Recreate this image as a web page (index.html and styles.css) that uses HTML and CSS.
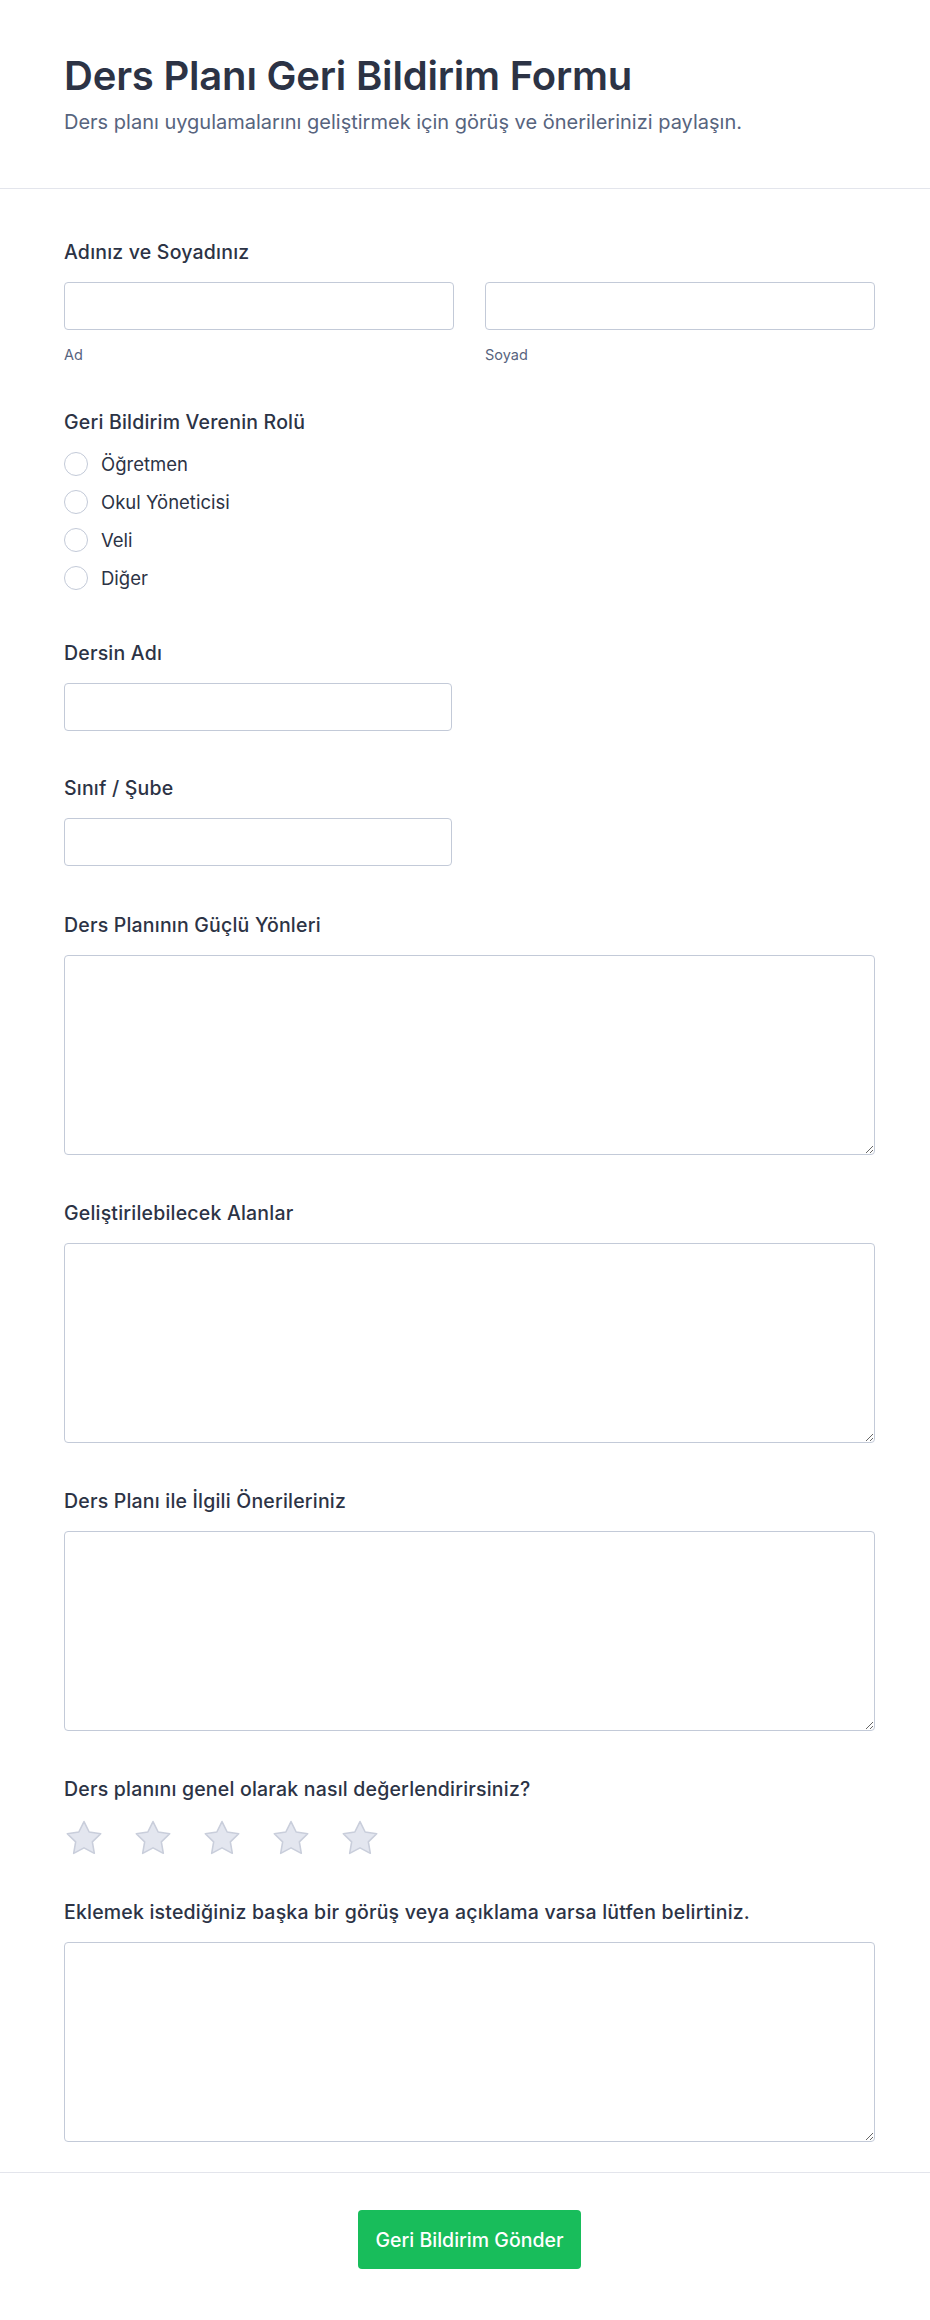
FILE: index.html
```html
<!DOCTYPE html>
<html lang="tr">
<head>
<meta charset="utf-8">
<title>Ders Planı Geri Bildirim Formu</title>
<link rel="stylesheet" href="styles.css">
</head>
<body>
<header class="page-header">
  <h1 class="title">Ders Planı Geri Bildirim Formu</h1>
  <p class="subtitle">Ders planı uygulamalarını geliştirmek için görüş ve önerilerinizi paylaşın.</p>
</header>

<form class="form">
  <div class="field">
    <label class="label">Adınız ve Soyadınız</label>
    <div class="name-grid">
      <div class="name-col">
        <input class="input" type="text">
        <span class="sublabel">Ad</span>
      </div>
      <div class="name-col">
        <input class="input" type="text">
        <span class="sublabel">Soyad</span>
      </div>
    </div>
  </div>

  <div class="field field-radio">
    <label class="label">Geri Bildirim Verenin Rolü</label>
    <div class="radio-list">
      <label class="radio"><span class="radio-circle"></span><span>Öğretmen</span></label>
      <label class="radio"><span class="radio-circle"></span><span>Okul Yöneticisi</span></label>
      <label class="radio"><span class="radio-circle"></span><span>Veli</span></label>
      <label class="radio"><span class="radio-circle"></span><span>Diğer</span></label>
    </div>
  </div>

  <div class="field">
    <label class="label">Dersin Adı</label>
    <input class="input input-half" type="text">
  </div>

  <div class="field field-before-area">
    <label class="label">Sınıf / Şube</label>
    <input class="input input-half" type="text">
  </div>

  <div class="field field-area">
    <label class="label">Ders Planının Güçlü Yönleri</label>
    <textarea class="textarea"></textarea>
  </div>

  <div class="field field-area">
    <label class="label">Geliştirilebilecek Alanlar</label>
    <textarea class="textarea"></textarea>
  </div>

  <div class="field field-area">
    <label class="label">Ders Planı ile İlgili Önerileriniz</label>
    <textarea class="textarea"></textarea>
  </div>

  <div class="field field-rating">
    <label class="label label-rating">Ders planını genel olarak nasıl değerlendirirsiniz?</label>
    <div class="stars">
      <svg class="star" viewBox="0 0 24 24"><path d="M12 2.6l2.95 5.98 6.6.96-4.78 4.65 1.13 6.57L12 17.66l-5.9 3.1 1.130-6.57-4.78-4.65 6.6-.96z"/></svg>
      <svg class="star" viewBox="0 0 24 24"><path d="M12 2.6l2.95 5.98 6.6.96-4.78 4.65 1.13 6.57L12 17.66l-5.9 3.1 1.13-6.57-4.78-4.65 6.6-.96z"/></svg>
      <svg class="star" viewBox="0 0 24 24"><path d="M12 2.6l2.95 5.98 6.6.96-4.78 4.65 1.13 6.57L12 17.66l-5.9 3.1 1.13-6.57-4.78-4.65 6.6-.96z"/></svg>
      <svg class="star" viewBox="0 0 24 24"><path d="M12 2.6l2.95 5.98 6.6.96-4.78 4.65 1.13 6.57L12 17.66l-5.9 3.1 1.13-6.57-4.78-4.65 6.6-.96z"/></svg>
      <svg class="star" viewBox="0 0 24 24"><path d="M12 2.6l2.95 5.98 6.6.96-4.78 4.65 1.13 6.57L12 17.66l-5.9 3.1 1.13-6.57-4.78-4.65 6.6-.96z"/></svg>
    </div>
  </div>

  <div class="field field-last">
    <label class="label">Eklemek istediğiniz başka bir görüş veya açıklama varsa lütfen belirtiniz.</label>
    <textarea class="textarea"></textarea>
  </div>
</form>

<footer class="page-footer">
  <button class="submit" type="button">Geri Bildirim Gönder</button>
</footer>
</body>
</html>
```

FILE: styles.css
```css
* {
  box-sizing: border-box;
}

html, body {
  margin: 0;
  padding: 0;
  background: #ffffff;
}

body {
  font-family: Inter, "Noto Sans", "Liberation Sans", sans-serif;
  color: #2c3345;
}

.page-header {
  padding: 52px 55px 52px 64px;
  border-bottom: 1px solid #e3e5ec;
}

.title {
  margin: 0;
  font-size: 40px;
  line-height: 48px;
  font-weight: 600;
  color: #2c3345;
  letter-spacing: -0.2px;
}

.subtitle {
  margin: 9px 0 0;
  font-size: 20px;
  line-height: 27px;
  color: #57647e;
}

.form {
  padding: 52px 55px 30px 64px;
  display: flex;
  flex-direction: column;
}

.field {
  display: flex;
  flex-direction: column;
  margin-bottom: 46px;
}

.field-radio {
  margin-bottom: 52px;
}

.field-before-area {
  margin-bottom: 48px;
}

.field-area {
  margin-bottom: 47px;
}

.field-rating {
  margin-bottom: 42px;
}

.field-last {
  margin-bottom: 0;
}

.label {
  display: block;
  font-size: 19.5px;
  line-height: 22px;
  font-weight: 500;
  letter-spacing: 0.2px;
  color: #2c3345;
  margin-bottom: 19px;
}

.label-rating {
  margin-bottom: 17px;
}

.name-grid {
  display: grid;
  grid-template-columns: 1fr 1fr;
  column-gap: 31px;
}

.name-col {
  display: flex;
  flex-direction: column;
}

.input {
  display: block;
  width: 100%;
  height: 48px;
  border: 1px solid #c3cad8;
  border-radius: 4px;
  background: #ffffff;
  font-family: inherit;
  font-size: 16px;
  padding: 0 12px;
  outline: none;
}

.input-half {
  width: 388px;
}

.sublabel {
  margin-top: 15px;
  font-size: 14.5px;
  line-height: 20px;
  color: #57647e;
}

.radio-list {
  display: flex;
  flex-direction: column;
  gap: 14px;
}

.radio {
  display: flex;
  align-items: center;
  gap: 13px;
  height: 24px;
  font-size: 18.5px;
  line-height: 24px;
  color: #2c3345;
}

.radio-circle {
  width: 24px;
  height: 24px;
  border: 1px solid #c3cad8;
  border-radius: 50%;
  background: #ffffff;
  flex: none;
}

.textarea {
  display: block;
  width: 100%;
  height: 200px;
  border: 1px solid #c3cad8;
  border-radius: 4px;
  background: #ffffff;
  font-family: inherit;
  font-size: 16px;
  padding: 10px 12px;
  outline: none;
  resize: vertical;
}

.stars {
  display: flex;
  gap: 27px;
  margin-left: -1px;
}

.star {
  width: 42px;
  height: 42px;
  display: block;
}

.star path {
  fill: #e3e6ef;
  stroke: #c9cedb;
  stroke-width: 0.9;
  stroke-linejoin: round;
}

.page-footer {
  border-top: 1px solid #e3e5ec;
  padding: 37px 55px 50px 64px;
  display: flex;
  justify-content: center;
}

.submit {
  height: 59px;
  padding: 0 18px;
  min-width: 222px;
  border: none;
  border-radius: 4px;
  background: #18bd5b;
  color: #ffffff;
  font-family: inherit;
  font-size: 19.5px;
  font-weight: 500;
  cursor: pointer;
}
```
